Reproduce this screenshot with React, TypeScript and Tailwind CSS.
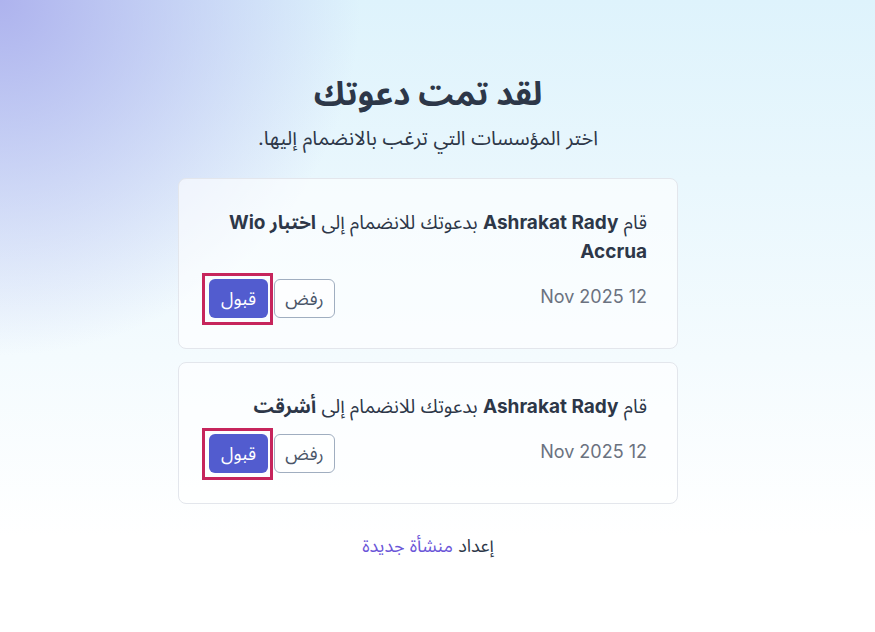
import React from "react";

const invites = [
  { id: 1, org: "اختبار Wio Accrua", date: "12 Nov 2025" },
  { id: 2, org: "أشرقت", date: "12 Nov 2025" },
];

function InviteCard({ org, date }: { org: string; date: string }) {
  return (
    <div className="w-[500px] bg-white/60 border border-[#e3e6ec] rounded-lg px-[30px] pt-[29px] pb-[30px]">
      <p className="text-[19px] leading-[29px] text-[#2d3748]">
        قام <span className="font-bold">Ashrakat Rady</span> بدعوتك للانضمام إلى{" "}
        <span className="font-bold">{org}</span>
      </p>
      <div className="flex items-center justify-between mt-[13px]">
        <span className="mb-[5px] text-[18px] text-[#6b7280]">{date}</span>
        <div className="flex items-center gap-1.5">
          <button className="h-[39px] w-[61px] rounded-md border border-[#a0aec0] bg-white/60 text-[18px] text-[#4a5568]">
            رفض
          </button>
          <button className="relative h-[39px] w-[59px] rounded-md bg-[#525ccf] text-[18px] text-white">
            قبول
            <span className="absolute -top-[6px] -bottom-[7px] -left-[7px] -right-[5px] border-[3px] border-[#c6255c]" />
          </button>
        </div>
      </div>
    </div>
  );
}

export default function App() {
  return (
    <div
      dir="rtl"
      className="min-h-[632px] w-full bg-white bg-[radial-gradient(ellipse_55%_75%_at_0%_0%,#aeb3ee_0%,rgba(174,179,238,0)_75%),linear-gradient(to_bottom,#def3fc_0%,rgba(255,255,255,0)_85%)] font-['Inter','Noto_Sans_Arabic','Noto_Kufi_Arabic','Noto_Naskh_Arabic','DejaVu_Sans',sans-serif]"
    >
      <div className="flex flex-col items-center pt-[73px] pr-[19px]">
        <h1 className="text-[33px] leading-[40px] font-bold text-[#2d3748]">لقد تمت دعوتك</h1>
        <p className="mt-[11px] text-[20px] leading-[28px] text-[#2d3748]">اختر المؤسسات التي ترغب بالانضمام إليها.</p>
        <div className="mt-[26px] flex flex-col gap-[13px]">
          {invites.map((inv) => (
            <InviteCard key={inv.id} org={inv.org} date={inv.date} />
          ))}
        </div>
        <p className="mt-[28px] text-[18px] text-[#2d3748]">
          إعداد <a className="text-[#6b56d8]">منشأة جديدة</a>
        </p>
      </div>
    </div>
  );
}
